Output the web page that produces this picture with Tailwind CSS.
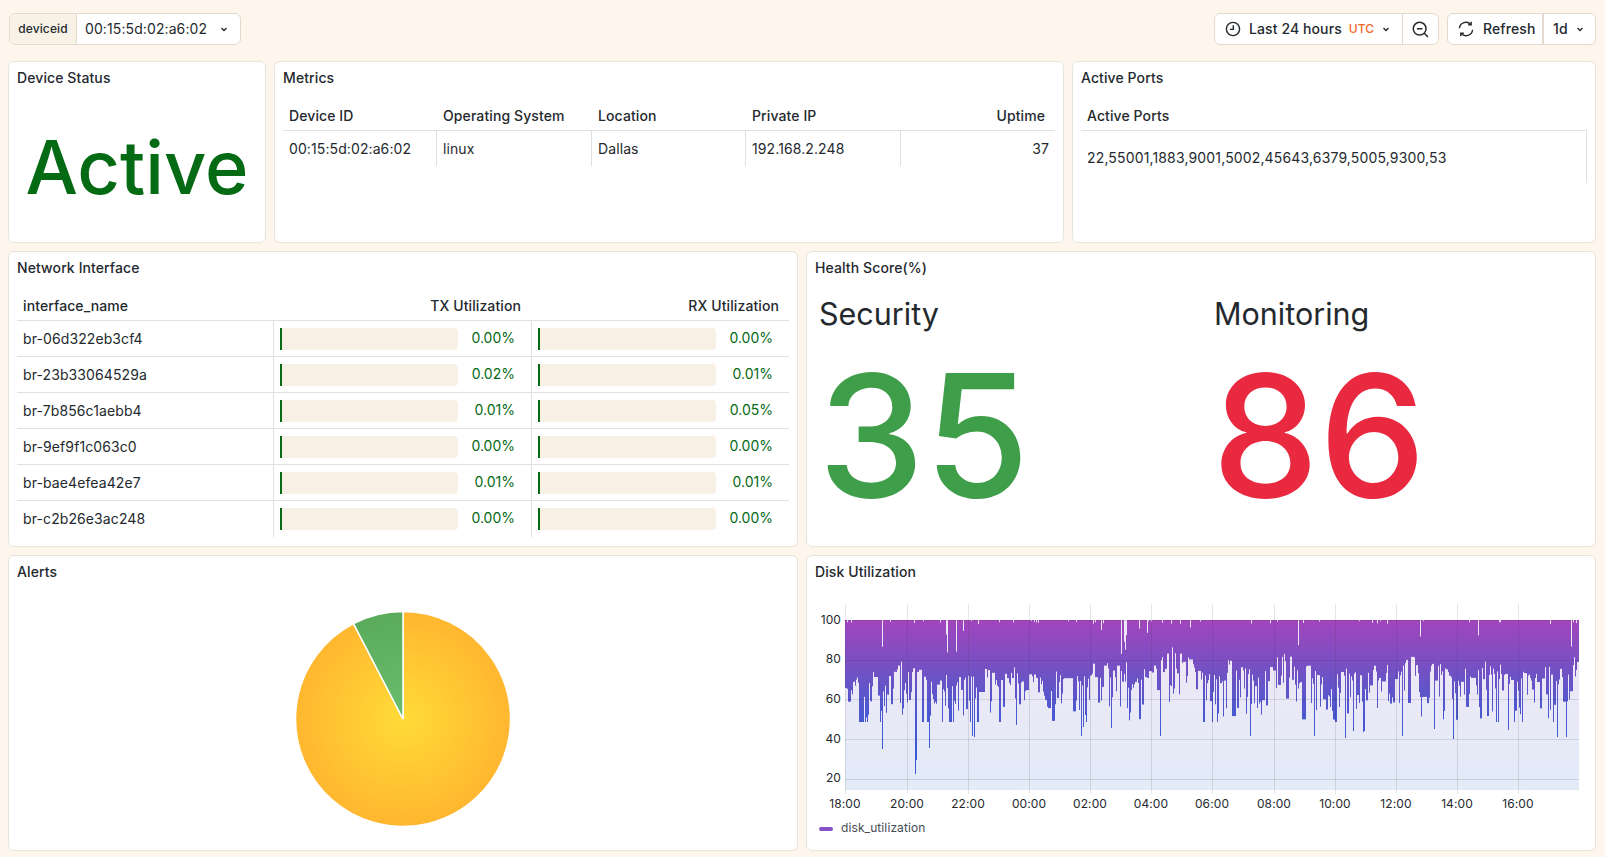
<!DOCTYPE html>
<html lang="en">
<head>
<meta charset="utf-8">
<title>Device dashboard</title>
<script src="https://cdn.jsdelivr.net/npm/@tailwindcss/browser@4"></script>
</head>
<body class="m-0 bg-[#fef5ec] font-[Inter,sans-serif] text-[#24292e] text-sm tracking-[.1px]">
<div class="w-[1605px] h-[857px] overflow-hidden pl-[8px] pr-[9px] pt-[13px] flex flex-col">

  <!-- toolbar -->
  <div class="flex justify-between h-8 mb-4 pl-[1px]">
    <div class="flex h-8 w-[232px] rounded-md border border-[#e4d9cc] bg-white overflow-hidden">
      <div class="w-[67px] bg-[#f8f1e6] border-r border-[#e4d9cc] flex items-center justify-center text-xs font-medium">deviceid</div>
      <div class="pl-2 flex items-center flex-1">00:15:5d:02:a6:02</div>
      <svg class="w-4 h-4 self-center mr-2" viewBox="0 0 16 16" fill="none" stroke="#24292e" stroke-width="1.4"><path d="M5.5 7l2.5 2.5L10.5 7"/></svg>
    </div>
    <div class="flex gap-[8px] font-medium">
      <div class="flex h-8 rounded-md border border-[#e4d9cc] bg-white w-[225px]">
        <div class="w-[188px] border-r border-[#e4d9cc] flex items-center pl-[10px]">
          <svg class="w-4 h-4 mr-[8px]" viewBox="0 0 16 16" fill="none" stroke="#24292e" stroke-width="1.4"><circle cx="8" cy="8" r="6.6"/><path d="M8.3 4.2V8.4H5"/></svg>
          <span>Last 24 hours</span>
          <span class="ml-[7px] text-xs text-[#f2672a]">UTC</span>
          <svg class="w-4 h-4 ml-[4px]" viewBox="0 0 16 16" fill="none" stroke="#24292e" stroke-width="1.4"><path d="M5.5 7l2.5 2.5L10.5 7"/></svg>
        </div>
        <div class="flex-1 flex items-center justify-center">
          <svg class="w-[17px] h-[17px]" viewBox="0 0 16 16" fill="none" stroke="#24292e" stroke-width="1.4"><circle cx="7.2" cy="7.2" r="6"/><path d="M4.6 7.2h5.2M11.6 11.6l3.4 3.4"/></svg>
        </div>
      </div>
      <div class="flex h-8 rounded-md border border-[#e4d9cc] bg-white w-[149px]">
        <div class="w-[96px] border-r-2 border-[#e4d9cc] flex items-center pl-[10px]">
          <svg class="w-4 h-4 mr-[9px] shrink-0" viewBox="0 0 16 16" fill="none" stroke="#24292e" stroke-width="1.4"><path d="M1.4 7.2A6.6 6.6 0 0 1 12.8 3.4M14.6 8.8A6.6 6.6 0 0 1 3.2 12.6"/><path d="M13.2 .8v3h-3M2.8 15.2v-3h3"/></svg>
          <span>Refresh</span>
        </div>
        <div class="flex-1 flex items-center pl-[9px]">
          <span>1d</span>
          <svg class="w-4 h-4 ml-[4px]" viewBox="0 0 16 16" fill="none" stroke="#24292e" stroke-width="1.4"><path d="M5.5 7l2.5 2.5L10.5 7"/></svg>
        </div>
      </div>
    </div>
  </div>

  <!-- row 1 -->
  <div class="flex gap-[8px] h-[182px] mb-[8px]">
    <section class="w-[258px] shrink-0 bg-white border border-[#e8e2da] rounded-md flex flex-col">
      <h2 class="font-medium leading-[32px] pl-2 h-8">Device Status</h2>
      <div class="flex-1 flex items-center justify-center pb-[3px] text-[74px] leading-none font-medium text-[#056a14] tracking-normal">Active</div>
    </section>
    <section class="w-[790px] shrink-0 bg-white border border-[#e8e2da] rounded-md flex flex-col">
      <h2 class="font-medium leading-[32px] pl-2 h-8">Metrics</h2>
      <div class="mx-2 mt-[5px]">
        <div class="grid grid-cols-[154px_155px_154px_155px_1fr] h-[32px] pt-[2px] border-b border-[#e0e0e0] font-medium items-center">
          <div class="pl-[6px]">Device ID</div><div class="pl-[6px]">Operating System</div><div class="pl-[6px]">Location</div><div class="pl-[6px]">Private IP</div><div class="text-right pr-[10px]">Uptime</div>
        </div>
        <div class="grid grid-cols-[154px_155px_154px_155px_1fr] h-[35px] items-center">
          <div class="pl-[6px] h-full flex items-center border-r border-[#e0e0e0]">00:15:5d:02:a6:02</div>
          <div class="pl-[6px] h-full flex items-center border-r border-[#e0e0e0]">linux</div>
          <div class="pl-[6px] h-full flex items-center border-r border-[#e0e0e0]">Dallas</div>
          <div class="pl-[6px] h-full flex items-center border-r border-[#e0e0e0]">192.168.2.248</div>
          <div class="h-full flex items-center justify-end pr-[6px]">37</div>
        </div>
      </div>
    </section>
    <section class="flex-1 bg-white border border-[#e8e2da] rounded-md flex flex-col">
      <h2 class="font-medium leading-[32px] pl-2 h-8">Active Ports</h2>
      <div class="mx-2 mt-[5px]">
        <div class="h-[32px] pt-[2px] border-b border-[#e0e0e0] font-medium flex items-center pl-[6px]">Active Ports</div>
        <div class="h-[52px] pt-[2px] border-r border-[#e0e0e0] flex items-center pl-[6px] tracking-[.15px]">22,55001,1883,9001,5002,45643,6379,5005,9300,53</div>
      </div>
    </section>
  </div>

  <!-- row 2 -->
  <div class="flex gap-[8px] h-[296px] mb-[8px]">
    <section class="w-[790px] shrink-0 bg-white border border-[#e8e2da] rounded-md flex flex-col">
      <h2 class="font-medium leading-[32px] pl-2 h-8">Network Interface</h2>
      <div class="ml-2 mr-[8px] mt-[5px]">
        <div class="grid grid-cols-[257px_258px_1fr] h-[32px] pt-[2px] border-b border-[#e0e0e0] font-medium items-center">
          <div class="pl-[6px]">interface_name</div><div class="text-right pr-[11px]">TX Utilization</div><div class="text-right pr-[10px]">RX Utilization</div>
        </div>
        <div class="grid grid-cols-[257px_258px_1fr] h-9 border-b border-[#e0e0e0]">
          <div class="pl-[6px] flex items-center border-r border-[#e0e0e0]">br-06d322eb3cf4</div>
          <div class="flex items-center pl-[6px] border-r border-[#e0e0e0]"><div class="w-[178px] h-[22px] rounded-r-[4px] bg-[#f8f0e5]"><div class="w-[2px] h-full bg-[#056a14]"></div></div><div class="flex-1 text-right pr-[16px] pb-[2px] text-[#056a14] tracking-normal">0.00%</div></div>
          <div class="flex items-center pl-[6px]"><div class="w-[178px] h-[22px] rounded-r-[4px] bg-[#f8f0e5]"><div class="w-[2px] h-full bg-[#056a14]"></div></div><div class="flex-1 text-right pr-[16px] pb-[2px] text-[#056a14] tracking-normal">0.00%</div></div>
        </div>
        <div class="grid grid-cols-[257px_258px_1fr] h-9 border-b border-[#e0e0e0]">
          <div class="pl-[6px] flex items-center border-r border-[#e0e0e0]">br-23b33064529a</div>
          <div class="flex items-center pl-[6px] border-r border-[#e0e0e0]"><div class="w-[178px] h-[22px] rounded-r-[4px] bg-[#f8f0e5]"><div class="w-[2px] h-full bg-[#056a14]"></div></div><div class="flex-1 text-right pr-[16px] pb-[2px] text-[#056a14] tracking-normal">0.02%</div></div>
          <div class="flex items-center pl-[6px]"><div class="w-[178px] h-[22px] rounded-r-[4px] bg-[#f8f0e5]"><div class="w-[2px] h-full bg-[#056a14]"></div></div><div class="flex-1 text-right pr-[16px] pb-[2px] text-[#056a14] tracking-normal">0.01%</div></div>
        </div>
        <div class="grid grid-cols-[257px_258px_1fr] h-9 border-b border-[#e0e0e0]">
          <div class="pl-[6px] flex items-center border-r border-[#e0e0e0]">br-7b856c1aebb4</div>
          <div class="flex items-center pl-[6px] border-r border-[#e0e0e0]"><div class="w-[178px] h-[22px] rounded-r-[4px] bg-[#f8f0e5]"><div class="w-[2px] h-full bg-[#056a14]"></div></div><div class="flex-1 text-right pr-[16px] pb-[2px] text-[#056a14] tracking-normal">0.01%</div></div>
          <div class="flex items-center pl-[6px]"><div class="w-[178px] h-[22px] rounded-r-[4px] bg-[#f8f0e5]"><div class="w-[2px] h-full bg-[#056a14]"></div></div><div class="flex-1 text-right pr-[16px] pb-[2px] text-[#056a14] tracking-normal">0.05%</div></div>
        </div>
        <div class="grid grid-cols-[257px_258px_1fr] h-9 border-b border-[#e0e0e0]">
          <div class="pl-[6px] flex items-center border-r border-[#e0e0e0]">br-9ef9f1c063c0</div>
          <div class="flex items-center pl-[6px] border-r border-[#e0e0e0]"><div class="w-[178px] h-[22px] rounded-r-[4px] bg-[#f8f0e5]"><div class="w-[2px] h-full bg-[#056a14]"></div></div><div class="flex-1 text-right pr-[16px] pb-[2px] text-[#056a14] tracking-normal">0.00%</div></div>
          <div class="flex items-center pl-[6px]"><div class="w-[178px] h-[22px] rounded-r-[4px] bg-[#f8f0e5]"><div class="w-[2px] h-full bg-[#056a14]"></div></div><div class="flex-1 text-right pr-[16px] pb-[2px] text-[#056a14] tracking-normal">0.00%</div></div>
        </div>
        <div class="grid grid-cols-[257px_258px_1fr] h-9 border-b border-[#e0e0e0]">
          <div class="pl-[6px] flex items-center border-r border-[#e0e0e0]">br-bae4efea42e7</div>
          <div class="flex items-center pl-[6px] border-r border-[#e0e0e0]"><div class="w-[178px] h-[22px] rounded-r-[4px] bg-[#f8f0e5]"><div class="w-[2px] h-full bg-[#056a14]"></div></div><div class="flex-1 text-right pr-[16px] pb-[2px] text-[#056a14] tracking-normal">0.01%</div></div>
          <div class="flex items-center pl-[6px]"><div class="w-[178px] h-[22px] rounded-r-[4px] bg-[#f8f0e5]"><div class="w-[2px] h-full bg-[#056a14]"></div></div><div class="flex-1 text-right pr-[16px] pb-[2px] text-[#056a14] tracking-normal">0.01%</div></div>
        </div>
        <div class="grid grid-cols-[257px_258px_1fr] h-9">
          <div class="pl-[6px] flex items-center border-r border-[#e0e0e0]">br-c2b26e3ac248</div>
          <div class="flex items-center pl-[6px] border-r border-[#e0e0e0]"><div class="w-[178px] h-[22px] rounded-r-[4px] bg-[#f8f0e5]"><div class="w-[2px] h-full bg-[#056a14]"></div></div><div class="flex-1 text-right pr-[16px] pb-[2px] text-[#056a14] tracking-normal">0.00%</div></div>
          <div class="flex items-center pl-[6px]"><div class="w-[178px] h-[22px] rounded-r-[4px] bg-[#f8f0e5]"><div class="w-[2px] h-full bg-[#056a14]"></div></div><div class="flex-1 text-right pr-[16px] pb-[2px] text-[#056a14] tracking-normal">0.00%</div></div>
        </div>
      </div>
    </section>
    <section class="flex-1 bg-white border border-[#e8e2da] rounded-md flex flex-col">
      <h2 class="font-medium leading-[32px] pl-2 h-8">Health Score(%)</h2>
      <div class="grid grid-cols-2 pl-[12px] pt-[6px]">
        <div>
          <div class="text-[30.5px] leading-[48px] tracking-normal">Security</div>
          <div class="-ml-[1px] text-[170px] leading-[194px] font-medium text-[#3f9e4a] tracking-normal">35</div>
        </div>
        <div class="pl-[7px]">
          <div class="text-[30.5px] leading-[48px] tracking-normal">Monitoring</div>
          <div class="-ml-[2px] text-[170px] leading-[194px] font-medium text-[#e8293f] tracking-normal">86</div>
        </div>
      </div>
    </section>
  </div>

  <!-- row 3 -->
  <div class="flex gap-[8px] h-[296px]">
    <section class="w-[790px] shrink-0 bg-white border border-[#e8e2da] rounded-md flex flex-col">
      <h2 class="font-medium leading-[32px] pl-2 h-8">Alerts</h2>
      <div class="flex-1 flex justify-center pt-[22px]">
        <svg class="w-[218px] h-[218px]" viewBox="-109 -109 218 218">
          <defs>
            <radialGradient id="py" gradientUnits="userSpaceOnUse" cx="0" cy="0" r="107"><stop offset="0" stop-color="#ffdb38"/><stop offset="1" stop-color="#ffb72f"/></radialGradient>
            <radialGradient id="pg" gradientUnits="userSpaceOnUse" cx="0" cy="0" r="107"><stop offset="0" stop-color="#6bbd6e"/><stop offset="1" stop-color="#5aac5c"/></radialGradient>
          </defs>
          <path d="M0 0V-107.5A107.5 107.5 0 1 1 -49.5 -95.4Z" fill="url(#py)" stroke="#fff" stroke-width="1.5"/>
          <path d="M0 0L-49.5 -95.4A107.5 107.5 0 0 1 0 -107.5Z" fill="url(#pg)" stroke="#fff" stroke-width="1.5"/>
        </svg>
      </div>
    </section>
    <section class="flex-1 bg-white border border-[#e8e2da] rounded-md flex flex-col">
      <h2 class="font-medium leading-[32px] pl-2 h-8">Disk Utilization</h2>
      <svg id="chart" class="w-[788px] h-[262px]" viewBox="807 588 788 262" font-family="Inter, sans-serif" font-size="12">
        <defs>
          <linearGradient id="area" gradientUnits="userSpaceOnUse" x1="0" y1="620" x2="0" y2="790"><stop offset="0" stop-color="#f1e6f5"/><stop offset="1" stop-color="#e2ebf8"/></linearGradient>
          <linearGradient id="line" gradientUnits="userSpaceOnUse" x1="0" y1="620" x2="0" y2="775"><stop offset="0" stop-color="#a245bd"/><stop offset=".35" stop-color="#6f52c4"/><stop offset=".6" stop-color="#4a58d0"/><stop offset="1" stop-color="#3358d4"/></linearGradient>
        </defs>
        <rect x="845" y="620" width="734" height="170" fill="url(#area)"/>
        <path id="spikes" fill="none" stroke="url(#line)" stroke-width="1"/>
        <path stroke="#24292e" stroke-opacity=".12" fill="none" d="M845.5 604V794M907.5 604V794M968.5 604V794M1029.5 604V794M1090.5 604V794M1151.5 604V794M1212.5 604V794M1274.5 604V794M1335.5 604V794M1396.5 604V794M1457.5 604V794M1518.5 604V794M845 620.5H1579M845 660.5H1579M845 699.5H1579M845 739.5H1579M845 779.5H1579"/>
        <g fill="#24292e" text-anchor="end">
          <text x="841" y="623.5">100</text><text x="841" y="663">80</text><text x="841" y="702.5">60</text><text x="841" y="742.5">40</text><text x="841" y="782">20</text>
        </g>
        <g fill="#24292e" text-anchor="middle">
          <text x="845" y="808">18:00</text><text x="907" y="808">20:00</text><text x="968" y="808">22:00</text><text x="1029" y="808">00:00</text><text x="1090" y="808">02:00</text><text x="1151" y="808">04:00</text><text x="1212" y="808">06:00</text><text x="1274" y="808">08:00</text><text x="1335" y="808">10:00</text><text x="1396" y="808">12:00</text><text x="1457" y="808">14:00</text><text x="1518" y="808">16:00</text>
        </g>
        <rect x="819" y="827" width="14" height="4" rx="2" fill="#8450c8"/>
        <text x="841" y="831.5" fill="#464c54">disk_utilization</text>
      </svg>
    </section>
  </div>
</div>
<script>
  // Deterministic disk_utilization series: one sample per pixel column.
  (function () {
    var s = 12345;
    function r() { s = (s * 1664525 + 1013904223) % 4294967296; return s / 4294967296; }
    var big = {882:749,915:774,916:760,929:748,972:736,974:737,1016:725,1081:736,1083:727,1160:736,1111:728,
      1250:736,1314:736,1345:738,1353:731,1364:731,1363:732,1402:736,1434:729,1453:739,1508:730,1557:737,1566:737};
    var d = '';
    var lf = 0;
    var prev = 670;
    for (var x = 845; x < 1579; x++) {
      lf = lf * 0.95 + (r() - 0.5) * 0.5;
      var bot = 668 + lf * 20 + r() * 10;
      var t = r();
      if (t > 0.5) {
        bot += 8 + r() * 26;
        if (t > 0.82) bot += 6 + r() * 20;
        if (t > 0.98) bot += 4 + r() * 8;
      }
      if (r() < 0.3) bot = prev;
      bot = Math.min(bot, 722);
      prev = bot;
      if (big[x]) bot = big[x];
      var top = 620;
      var u = r();
      if (u > 0.985) top = 625 + r() * 30;
      else if (u > 0.93) top = 621 + r() * 3;
      if (x === 946 || x === 947 || (x >= 1124 && x <= 1126) || x === 1298 || x === 1478) { top = 634 + r() * 20; bot = top + 25 + r() * 20; }
      d += 'M' + (x + 0.5) + ' ' + top.toFixed(1) + 'V' + bot.toFixed(1);
    }
    document.getElementById('spikes').setAttribute('d', d);
  })();
</script>
</body>
</html>
